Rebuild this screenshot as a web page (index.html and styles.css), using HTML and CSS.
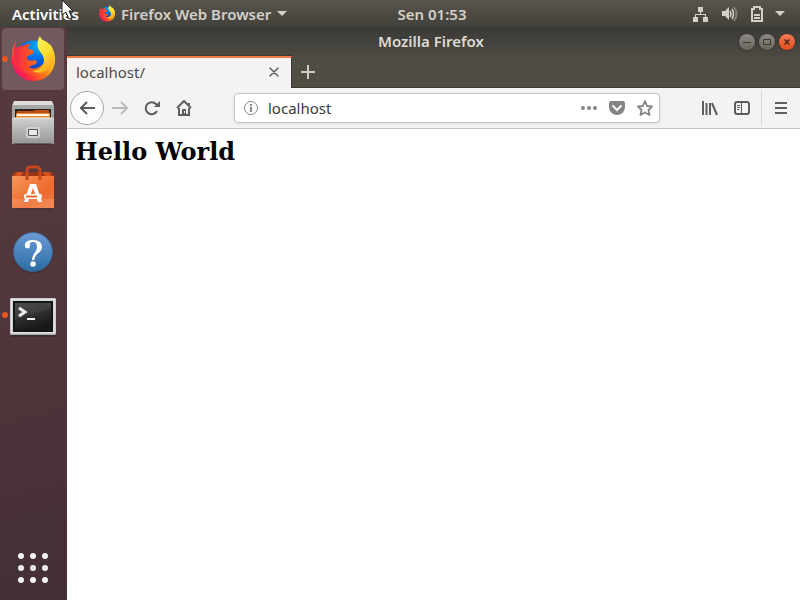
FILE: index.html
```html
<!DOCTYPE html>
<html lang="en">
<head>
<meta charset="utf-8">
<title>Mozilla Firefox</title>
<link rel="stylesheet" href="styles.css">
</head>
<body>
<svg class="defs" aria-hidden="true">
  <defs>
    <radialGradient id="globe" cx=".6" cy=".15" r=".9"><stop offset="0" stop-color="#00a8fa"/><stop offset=".5" stop-color="#0060df"/><stop offset="1" stop-color="#3a1e8c"/></radialGradient>
    <linearGradient id="fox" x1="1" y1=".1" x2=".1" y2=".9"><stop offset="0" stop-color="#fff04a"/><stop offset=".35" stop-color="#ffb51c"/><stop offset=".62" stop-color="#ff6a1c"/><stop offset=".85" stop-color="#fb2448"/><stop offset="1" stop-color="#e0148c"/></linearGradient>
    <linearGradient id="foxhead" x1="0" y1="0" x2="1" y2="0"><stop offset="0" stop-color="#ee2352"/><stop offset=".5" stop-color="#ff4f24"/><stop offset="1" stop-color="#ff8a16"/></linearGradient>
    <linearGradient id="flame" x1="0" y1="0" x2=".6" y2="1"><stop offset="0" stop-color="#fff36e"/><stop offset=".6" stop-color="#ffe030"/><stop offset="1" stop-color="#ffab18"/></linearGradient>
    <symbol id="firefox" viewBox="0 0 44 46">
      <circle cx="22" cy="22" r="17.500" fill="url(#globe)"/>
      <path d="M5 6C2 10 1 15 1 22C0 34 9 45 22 45C36 45 44 35 44 23C44 16 41 11 39 8C40 18 36 31 27 34C20 36 13 32 12 25C12 16 9 13 5 13Z" fill="url(#fox)"/>
      <path d="M5 5L5 13C7 10 9 10 11 10C15 8 18 8 20 8C17 10 17 12 17 13L22 14L22 17C20 20 16 19 16 21L17 24C21 26 24 22 26 26C24 30 19 29 18 31C23 35 29 31 32 28C31 37 16 41 9 32C4 28 0 17 5 5Z" fill="url(#foxhead)"/>
      <path d="M29 0C26 4 26 8 27 12C28 16 33 18 33 25C32 32 26 35 22 35C31 40 40 33 43 25C44 18 42 12 38 8C35 4 30 5 29 0Z" fill="url(#flame)"/>
    </symbol>
    <linearGradient id="metal" x1="0" y1="0" x2="0" y2="1"><stop offset="0" stop-color="#d0d0d0"/><stop offset="1" stop-color="#959595"/></linearGradient>
    <linearGradient id="bag" x1="0" y1="0" x2="1" y2="1"><stop offset="0" stop-color="#f49a5c"/><stop offset=".6" stop-color="#ee6a2c"/><stop offset="1" stop-color="#f07a42"/></linearGradient>
    <linearGradient id="help" x1="0" y1="0" x2="0" y2="1"><stop offset="0" stop-color="#6c9bd6"/><stop offset="1" stop-color="#2a6da3"/></linearGradient>
    <linearGradient id="screen" x1="0" y1="0" x2=".4" y2="1"><stop offset="0" stop-color="#4c4c4c"/><stop offset=".5" stop-color="#3c3c3c"/><stop offset=".54" stop-color="#303030"/><stop offset="1" stop-color="#181818"/></linearGradient>
  </defs>
</svg>

<header class="panel">
  <div class="panel-left">
    <button class="activities">Activities</button>
    <button class="app-menu">
      <svg class="app-icon" aria-hidden="true"><use href="#firefox"/></svg>
      <span>Firefox Web Browser</span>
      <svg width="10" height="6" aria-hidden="true"><path d="M0 0H10L5 5Z" fill="currentColor"/></svg>
    </button>
  </div>
  <button class="clock">Sen 01:53</button>
  <button class="status" aria-label="System menu">
    <svg width="16" height="16" viewBox="0 0 16 16" fill="currentColor"><path d="M5 1H10V6H8V8H13V11H15V16H10V11H12V9H3V11H5V16H0V11H2V8H7V6H5Z"/></svg>
    <svg width="16" height="16" viewBox="0 0 16 16"><path d="M0 5H3L7 1V14L3 10H0Z" fill="currentColor"/><path d="M8 5Q10 8 8 11M10 3Q13 8 10 13" fill="none" stroke="currentColor" stroke-width="1.500"/><path d="M12 1Q17 8 12 15" fill="none" stroke="#858279" stroke-width="2"/></svg>
    <svg width="12" height="16" viewBox="0 0 12 16" fill="none" stroke="currentColor" stroke-width="2"><path d="M3 3V1H9V3H11V15H1V3H4M3 9H9M3 12H9"/></svg>
    <svg width="10" height="6" viewBox="0 0 10 6"><path d="M0 0H10L5 5Z" fill="currentColor"/></svg>
  </button>
</header>

<div class="desktop">
  <nav class="dock" aria-label="Dock">
    <button class="launcher active running" aria-label="Firefox"><svg class="fx" aria-hidden="true"><use href="#firefox"/></svg></button>
    <button class="launcher" aria-label="Files">
      <svg width="62" height="62" viewBox="0 0 62 62"><path d="M12 9H50L52 14H10Z" fill="#dedede"/><path d="M10 13H52V52H10Z" fill="#a6a6a6"/><path d="M13 17H49V28H13Z" fill="#28231f"/><path d="M15 19H32V18H47V28H15Z" fill="#bb4b11"/><path d="M14 21H48V28H14Z" fill="#f08a35"/><path d="M15 23H47" stroke="#fff5e8" stroke-width="2"/><path d="M10 26H52V52H10Z" fill="url(#metal)"/><path d="M12 26H50" stroke="#eee"/><rect x="24" y="35" width="14" height="11" rx="2" fill="#d0d0d0"/><rect x="26" y="37" width="10" height="7" rx="1" fill="#555"/><rect x="27" y="38" width="8" height="5" fill="#e8e8e8"/><path d="M12 52H50" stroke="#3a292d" stroke-width="2" opacity=".5"/></svg>
    </button>
    <button class="launcher" aria-label="Ubuntu Software">
      <svg width="62" height="62" viewBox="0 0 62 62"><path d="M12 16H50L52 20H10Z" fill="#9c3716"/><path d="M15 16H21L19 20H12ZM41 16H48L49 20H43Z" fill="#d55020"/><path d="M10 20H52V52H10Z" fill="url(#bag)"/><path d="M10 43H52V52H10Z" fill="#fff" opacity=".13"/><path d="M25 24V15Q25 11 28 11H34Q38 11 38 15V24" fill="none" stroke="#c8461c" stroke-width="3"/><path d="M28 28H34L40 46H36L31 32L26 46H22Z" fill="#fff"/><rect x="22" y="38" width="18" height="5" rx="2" fill="#fff"/><path d="M24 40.500H35" stroke="#ee6a2c" stroke-width="2"/><path d="M12 53H50" stroke="#35242a" opacity=".5"/></svg>
    </button>
    <button class="launcher" aria-label="Help">
      <svg width="62" height="62" viewBox="0 0 62 62"><circle cx="31" cy="33" r="20" fill="#29262d" opacity=".5"/><circle cx="31" cy="32" r="19.500" fill="url(#help)" stroke="#3d638d"/><path d="M23 27C22 22 26 20 31 20C37 20 40 23 40 27C40 33 32.500 33 32.500 40H30C30 34 35 32 35 27C35 23 33 22 31 22C29 22 27 23 28 26C28 29 24 29 23 27Z" fill="#fff"/><circle cx="31" cy="44" r="2.800" fill="#fff"/></svg>
    </button>
    <button class="launcher running" aria-label="Terminal">
      <svg width="62" height="62" viewBox="0 0 62 62"><rect x="8" y="15" width="46" height="38" rx="2" fill="#32282b" opacity=".7"/><rect x="8" y="14" width="46" height="37" rx="1" fill="#aaa"/><path d="M9 15H53V49H9Z" fill="#d4d4d4" stroke="#efefef"/><rect x="11" y="17" width="40" height="31" fill="#161616"/><rect x="13" y="19" width="36" height="27" fill="url(#screen)"/><path d="M17 24L23 28L17 32" fill="none" stroke="#eee" stroke-width="3"/><path d="M25 35H33" stroke="#eee" stroke-width="2"/></svg>
    </button>
    <button class="launcher show-apps" aria-label="Show Applications">
      <svg width="62" height="62" viewBox="0 0 62 62" fill="#f2f1f1"><circle cx="19" cy="19" r="3"/><circle cx="31" cy="19" r="3"/><circle cx="43" cy="19" r="3"/><circle cx="19" cy="31" r="3"/><circle cx="31" cy="31" r="3"/><circle cx="43" cy="31" r="3"/><circle cx="19" cy="43" r="3"/><circle cx="31" cy="43" r="3"/><circle cx="43" cy="43" r="3"/></svg>
    </button>
  </nav>

  <section class="window">
    <div class="titlebar">
      <span class="title">Mozilla Firefox</span>
      <div class="controls">
        <button class="control" aria-label="Minimize"><svg width="16" height="16" viewBox="0 0 16 16"><path d="M4 8.500H12" stroke="#3b3a35"/></svg></button>
        <button class="control" aria-label="Maximize"><svg width="16" height="16" viewBox="0 0 16 16"><path d="M4.500 5.500H11.500V10.500H4.500Z" fill="none" stroke="#3b3a35"/></svg></button>
        <button class="control close" aria-label="Close"><svg width="16" height="16" viewBox="0 0 16 16"><path d="M5.500 5.500L10.500 10.500M10.500 5.500L5.500 10.500" stroke="#4b2516" stroke-width="1.500"/></svg></button>
      </div>
    </div>
    <div class="tabs">
      <div class="tab"><span>localhost/</span><button aria-label="Close tab"><svg width="10" height="10" viewBox="0 0 10 10"><path d="M1 1L9 9M9 1L1 9" stroke="#5d5d5b" stroke-width="1.500" stroke-linecap="round"/></svg></button></div>
      <button class="new-tab" aria-label="New tab"><svg width="14" height="14" viewBox="0 0 14 14"><path d="M7 0V14M0 7H14" stroke="#cfcdc8" stroke-width="2"/></svg></button>
    </div>
    <div class="toolbar">
      <button class="back" aria-label="Back"><svg width="16" height="16" viewBox="0 0 16 16" class="line"><path d="M16 8H1M8 2L2 8L8 14"/></svg></button>
      <button class="tool" aria-label="Forward" disabled><svg width="16" height="16" viewBox="0 0 16 16" class="line faint"><path d="M0 8H15M9 2L15 8L9 14"/></svg></button>
      <button class="tool" aria-label="Reload"><svg width="16" height="16" viewBox="0 0 16 16" class="line"><path d="M13 11A6 6 0 1 1 12 4L14 6"/><path d="M16 1V7H10Z" fill="#5d5d5b" stroke="none"/></svg></button>
      <button class="tool" aria-label="Home"><svg width="16" height="16" viewBox="0 0 16 16" class="line"><path d="M1 8L8 1L15 8M3 8V15H13V8M13 3V5"/><path d="M6 9H10V14H6Z" fill="#5d5d5b" stroke="none"/><path d="M8 11H9V13H8Z" fill="#fff" stroke="none"/></svg></button>
      <form class="urlbar">
        <svg width="14" height="14" viewBox="0 0 14 14"><circle cx="7" cy="7" r="6.500" fill="none" stroke="#858585"/><path d="M7 6V11M7 3V5" stroke="#858585" stroke-width="2"/></svg>
        <input type="text" value="localhost" aria-label="Address">
        <button type="button" aria-label="Page actions"><svg width="16" height="16" viewBox="0 0 16 16" fill="#858585"><circle cx="2" cy="8" r="2"/><circle cx="8" cy="8" r="2"/><circle cx="14" cy="8" r="2"/></svg></button>
        <button type="button" aria-label="Save to Pocket"><svg width="16" height="16" viewBox="0 0 16 16"><path d="M2 1H14Q16 1 16 3V7A8 8 0 0 1 0 7V3Q0 1 2 1Z" fill="#858585"/><path d="M4 6L8 10L12 6" fill="none" stroke="#fff" stroke-width="2" stroke-linecap="round"/></svg></button>
        <button type="button" aria-label="Bookmark this page"><svg width="16" height="16" viewBox="0 0 16 16"><path d="M8 1L10 6L15 6.500L11.500 10L12.500 15L8 12.500L3.500 15L4.500 10L1 6.500L6 6Z" fill="none" stroke="#858585" stroke-width="1.800" stroke-linejoin="round"/></svg></button>
      </form>
      <button class="tool library" aria-label="Library"><svg width="16" height="16" viewBox="0 0 16 16" class="line"><path d="M1 1V15M4.500 3V15M8 3V15M10 3L15 15"/></svg></button>
      <button class="tool" aria-label="Sidebars"><svg width="16" height="16" viewBox="0 0 16 16" class="line"><rect x="1" y="2" width="14" height="12" rx="2"/><path d="M7.500 3V13M3 5.500H6M3 7.500H6M3 9.500H5" stroke-width="1"/></svg></button>
      <button class="menu" aria-label="Open menu"><svg width="16" height="16" viewBox="0 0 16 16" class="line"><path d="M3 3H15M3 8H15M3 13H15"/></svg></button>
    </div>
    <main class="page"><h1>Hello World</h1></main>
  </section>
</div>

<svg class="pointer" width="16" height="24" viewBox="0 0 16 24" aria-hidden="true"><path d="M1 0V15L5 12L8 19L11 18L8 11H12Z" fill="#fff" stroke="#222"/></svg>
</body>
</html>
```
FILE: styles.css
```css
* { box-sizing: border-box; }

body {
  margin: 0;
  min-height: 100vh;
  display: flex;
  flex-direction: column;
  font: 15px/20px "Noto Sans", "Open Sans", sans-serif;
  color: #4c4c4c;
  overflow: hidden;
}

button {
  display: flex;
  align-items: center;
  justify-content: center;
  padding: 0;
  border: 0;
  background: none;
  color: inherit;
  font: inherit;
}

svg { display: block; flex: none; }
.defs { position: absolute; width: 0; height: 0; }

.panel {
  display: grid;
  grid-template-columns: 1fr auto 1fr;
  align-items: center;
  height: 27px;
  padding: 0 15px 0 12px;
  background: linear-gradient(#58554c, #42413b);
  color: #d3d0c9;
  font-weight: 600;
  text-shadow: 0 1px 1px #2d2c28;
}
.panel-left { display: flex; gap: 20px; }
.activities { color: #fff; }
.app-menu { gap: 6px; }
.app-icon { width: 16px; height: 17px; }
.clock { padding-left: 67px; }
.status { justify-self: end; gap: 13px; }
.status svg:last-child { margin-left: -1px; }

.desktop { display: flex; flex: 1; }

.dock {
  display: flex;
  flex-direction: column;
  gap: 2px;
  flex: none;
  width: 67px;
  padding: 1px 3px 1px 2px;
  background: linear-gradient(165deg, #573a3e, #50363b 50%, #432f36);
}
.launcher {
  position: relative;
  width: 62px;
  height: 62px;
  border-radius: 4px;
}
.launcher.active { background: #705a5d; }
.launcher.running::before {
  content: "";
  position: absolute;
  left: 0;
  top: 28px;
  width: 6px;
  height: 6px;
  border-radius: 50%;
  background: #e95420;
}
.fx { width: 44px; height: 46px; }
.show-apps { margin-top: auto; }

.window {
  display: flex;
  flex: 1;
  flex-direction: column;
  min-width: 0;
  background: #fff;
}
.titlebar {
  display: grid;
  grid-template-columns: 1fr auto 1fr;
  align-items: center;
  height: 29px;
  padding-right: 5px;
  background: linear-gradient(#3b3a36, #4b4942);
  color: #dfdbd2;
  font-weight: 600;
}
.title { grid-column: 2; padding-bottom: 2px; }
.controls { display: flex; justify-self: end; gap: 4px; }
.control {
  width: 16px;
  height: 16px;
  border-radius: 50%;
  background: linear-gradient(#8b8982, #68665f);
  box-shadow: 0 0 0 1px #35342f;
}
.control.close { background: linear-gradient(#f37b51, #e34d1e); }

.tabs {
  display: flex;
  height: 32px;
  background: #504d45;
  border-bottom: 1px solid #3a3934;
}
.tab {
  display: flex;
  align-items: center;
  justify-content: space-between;
  width: 225px;
  height: 32px;
  padding: 0 12px 2px 9px;
  border-top: 2px solid #f07746;
  border-right: 1px solid #3a3934;
  background: #f4f3f2;
  box-shadow: 0 -1px #3a3934;
}
.new-tab { width: 32px; }

.toolbar {
  display: flex;
  align-items: center;
  height: 41px;
  padding: 0 3px;
  background: #f4f3f2;
  border-bottom: 1px solid #c5c3c0;
}
.line { fill: none; stroke: #5d5d5b; stroke-width: 2; }
.faint { stroke: #bbbab8; }
.back {
  width: 34px;
  height: 34px;
  border: 1px solid #aaa9a7;
  border-radius: 50%;
  background: #fdfdfd;
}
.tool { width: 32px; height: 32px; }
.urlbar {
  display: flex;
  align-items: center;
  flex: 1;
  min-width: 0;
  height: 30px;
  gap: 12px;
  margin: 0 34px;
  padding: 0 6px 0 9px;
  border: 1px solid #c5c3c0;
  border-radius: 4px;
  background: #fff;
  box-shadow: 0 1px 3px #e2e0de;
}
.urlbar input {
  flex: 1;
  min-width: 0;
  margin-left: -2px;
  padding: 0;
  border: 0;
  outline: 0;
  background: none;
  color: #3b3b3b;
  font: inherit;
}
.menu {
  width: 36px;
  height: 34px;
  margin-left: 3px;
  border-left: 1px solid #d7d5d3;
}

.page { flex: 1; padding: 8px; }
.page h1 {
  margin: 0;
  color: #000;
  font: bold 24px/29px "DejaVu Serif", serif;
}

.pointer { position: absolute; left: 61px; top: 0; }
```
